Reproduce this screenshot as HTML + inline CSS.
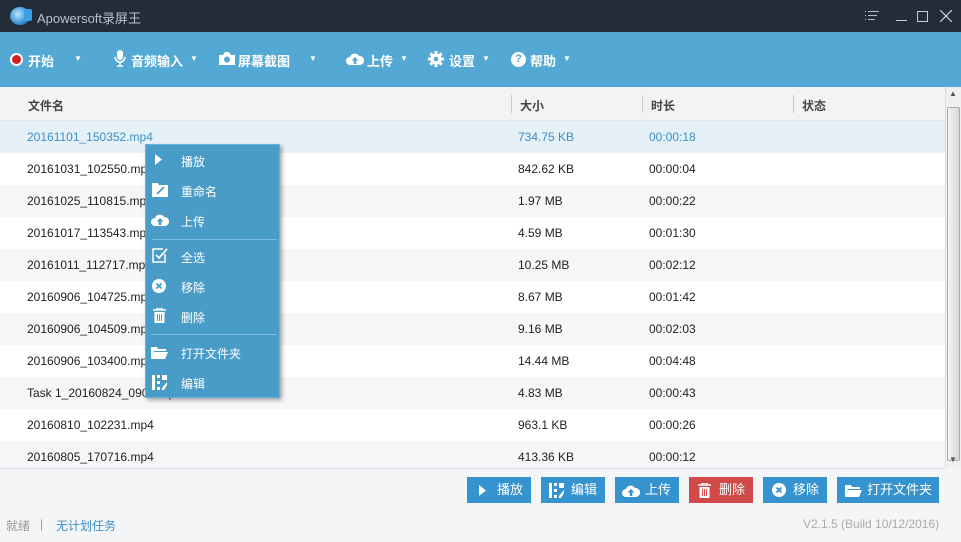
<!DOCTYPE html>
<html><head><meta charset="utf-8"><style>
*{margin:0;padding:0;box-sizing:border-box}
body{width:961px;height:542px;overflow:hidden;font-family:"Liberation Sans","Noto Sans CJK SC",sans-serif;font-size:12px;background:#f4f5f7;position:relative;color:#222}
.title{position:absolute;left:0;top:0;width:961px;height:32px;background:#232d3a;color:#b9c0c8;font-size:13px}
.tb{position:absolute;left:0;top:32px;width:961px;height:55px;background:#53a8d4;color:#fff;font-weight:bold;font-size:13px}
.tb span{position:absolute;top:19px}
.tb .ar{font-size:8px;font-weight:normal;top:22px}
.tb svg,.btn svg,.menu svg{position:absolute}
.hdr{position:absolute;left:0;top:87px;width:945px;height:34px;background:#f2f3f5;border-bottom:1px solid #e2e6ea;font-weight:bold;color:#444}
.hdr span{position:absolute;top:10px}
.sep{position:absolute;top:8px;width:1px;height:18px;background:#ccc}
.row{position:absolute;left:0;width:945px;height:32px}
.row span{position:absolute;top:9px}
.menu{position:absolute;left:145px;top:144px;width:135px;height:254px;background:#4a9cc8;box-shadow:2px 2px 4px rgba(0,0,0,.35);color:#fff;border:1px solid #6bb0d6}
.menu .t{position:absolute;left:35px}
.msep{position:absolute;left:6px;width:125px;height:1px;background:#7bbbe0}
.btn{position:absolute;top:477px;height:26px;background:#3593cf;color:#fff;font-size:13px;line-height:26px}
.btn .t{position:absolute;left:30px}
.scroll{position:absolute;left:945px;top:87px;width:16px;height:381px;background:#f0f0f0;border-left:1px solid #ddd}
</style></head><body>
<div class="title">
<div style="position:absolute;left:10px;top:7px;width:20px;height:18px;border-radius:50%;background:radial-gradient(circle at 40% 40%,#bfe6ff,#1f7fc9 70%)"></div>
<div style="position:absolute;left:24px;top:9px;width:8px;height:12px;background:#3aa0e6;border-radius:2px"></div>
<span style="position:absolute;left:37px;top:8px">Apowersoft录屏王</span>
<svg style="position:absolute;left:865px;top:10px" width="14" height="12"><g stroke="#bbb" stroke-width="1"><path d="M0 1.5h1M3 1.5h11M0 5.5h1M3 5.5h9M0 9.5h1M3 9.5h7"/></g></svg>
<div style="position:absolute;left:896px;top:20px;width:11px;height:1px;background:#ccc"></div>
<div style="position:absolute;left:917px;top:11px;width:11px;height:11px;border:1.5px solid #ccc"></div>
<svg style="position:absolute;left:940px;top:10px" width="12" height="12"><path d="M0 0L12 12M12 0L0 12" stroke="#ccc" stroke-width="1.3"/></svg>
</div>
<div class="tb">
<div style="position:absolute;left:10px;top:21px;width:13px;height:13px;border-radius:50%;background:#d32020;border:2px solid #fff"></div>
<span style="left:28px">开始</span><span class="ar" style="left:74px">▼</span>
<svg style="left:114px;top:18px" width="12" height="17"><rect x="3" y="0" width="6" height="10" rx="3" fill="#fff"/><path d="M1 7a5 5 0 0 0 10 0M6 12v4M3 16h6" stroke="#fff" stroke-width="1.5" fill="none"/></svg>
<span style="left:131px">音频输入</span><span class="ar" style="left:190px">▼</span>
<svg style="left:219px;top:20px" width="16" height="13"><path d="M0 3h4l2-3h4l2 3h4v10H0z" fill="#fff"/><circle cx="8" cy="7.5" r="3" fill="#53a8d4"/></svg>
<span style="left:238px">屏幕截图</span><span class="ar" style="left:309px">▼</span>
<svg style="left:346px;top:21px" width="18" height="12"><path d="M4 12a4 4 0 0 1 0-8a5 5 0 0 1 9-1a4.5 4.5 0 0 1 1 9z" fill="#fff"/><path d="M9 4l-3.5 3.5h2.2V11h2.6V7.5h2.2z" fill="#53a8d4"/></svg>
<span style="left:367px">上传</span><span class="ar" style="left:400px">▼</span>
<svg style="left:428px;top:19px" width="16" height="16" viewBox="0 0 16 16"><g fill="#fff"><circle cx="8" cy="8" r="5.5"/><rect x="6.5" y="0" width="3" height="16"/><rect x="0" y="6.5" width="16" height="3"/><rect x="6.5" y="0" width="3" height="16" transform="rotate(45 8 8)"/><rect x="6.5" y="0" width="3" height="16" transform="rotate(-45 8 8)"/></g><circle cx="8" cy="8" r="2.3" fill="#53a8d4"/></svg>
<span style="left:449px">设置</span><span class="ar" style="left:482px">▼</span>
<div style="position:absolute;left:511px;top:20px;width:15px;height:15px;border-radius:50%;background:#fff;color:#53a8d4;font-size:11px;text-align:center;line-height:15px">?</div>
<span style="left:530px">帮助</span><span class="ar" style="left:563px">▼</span>
</div>
<div class="hdr"><span style="left:28px">文件名</span><div class="sep" style="left:511px"></div><span style="left:520px">大小</span><div class="sep" style="left:642px"></div><span style="left:651px">时长</span><div class="sep" style="left:793px"></div><span style="left:802px">状态</span></div>

<div class="row" style="top:121px;background:#e5f1f7;color:#3a8fc4"><span style="left:27px">20161101_150352.mp4</span><span style="left:518px">734.75 KB</span><span style="left:649px">00:00:18</span></div>
<div class="row" style="top:153px;background:#fff"><span style="left:27px">20161031_102550.mp4</span><span style="left:518px">842.62 KB</span><span style="left:649px">00:00:04</span></div>
<div class="row" style="top:185px;background:#f5f6f8"><span style="left:27px">20161025_110815.mp4</span><span style="left:518px">1.97 MB</span><span style="left:649px">00:00:22</span></div>
<div class="row" style="top:217px;background:#fff"><span style="left:27px">20161017_113543.mp4</span><span style="left:518px">4.59 MB</span><span style="left:649px">00:01:30</span></div>
<div class="row" style="top:249px;background:#f5f6f8"><span style="left:27px">20161011_112717.mp4</span><span style="left:518px">10.25 MB</span><span style="left:649px">00:02:12</span></div>
<div class="row" style="top:281px;background:#fff"><span style="left:27px">20160906_104725.mp4</span><span style="left:518px">8.67 MB</span><span style="left:649px">00:01:42</span></div>
<div class="row" style="top:313px;background:#f5f6f8"><span style="left:27px">20160906_104509.mp4</span><span style="left:518px">9.16 MB</span><span style="left:649px">00:02:03</span></div>
<div class="row" style="top:345px;background:#fff"><span style="left:27px">20160906_103400.mp4</span><span style="left:518px">14.44 MB</span><span style="left:649px">00:04:48</span></div>
<div class="row" style="top:377px;background:#f5f6f8"><span style="left:27px">Task 1_20160824_0906.mp4</span><span style="left:518px">4.83 MB</span><span style="left:649px">00:00:43</span></div>
<div class="row" style="top:409px;background:#fff"><span style="left:27px">20160810_102231.mp4</span><span style="left:518px">963.1 KB</span><span style="left:649px">00:00:26</span></div>
<div class="row" style="top:441px;background:#f5f6f8;height:27px"><span style="left:27px">20160805_170716.mp4</span><span style="left:518px">413.36 KB</span><span style="left:649px">00:00:12</span></div>
<div style="position:absolute;left:0;top:468px;width:945px;height:1px;background:#dde1e5"></div>

<div class="scroll"><span style="position:absolute;left:3px;top:2px;font-size:8px;color:#555">▲</span>
<div style="position:absolute;left:1px;top:20px;width:13px;height:354px;background:linear-gradient(90deg,#f4f4f4,#d6d6d6);border:1px solid #aaa;border-radius:2px"></div>
<span style="position:absolute;left:3px;top:368px;font-size:8px;color:#555">▼</span></div>

<div class="menu">
<svg style="left:9px;top:9px" width="8" height="11"><path d="M0 0L7 5.5L0 11z" fill="#fff"/></svg><div class="t" style="top:8px">播放</div>
<svg style="left:6px;top:38px" width="16" height="14"><path d="M0 0h6l1 2h9v12H0z" fill="#fff"/><path d="M5 11l7-7" stroke="#4a9cc8" stroke-width="1.6"/></svg><div class="t" style="top:38px">重命名</div>
<svg style="left:5px;top:69px" width="18" height="12"><path d="M4 12a4 4 0 0 1 0-8a5 5 0 0 1 9-1a4.5 4.5 0 0 1 1 9z" fill="#fff"/><path d="M9 4l-3.5 3.5h2.2V11h2.6V7.5h2.2z" fill="#4a9cc8"/></svg><div class="t" style="top:68px">上传</div>
<div class="msep" style="top:94px"></div>
<svg style="left:6px;top:103px" width="16" height="15"><path d="M13 6v8H1V1h10" stroke="#fff" stroke-width="1.5" fill="none"/><path d="M4 7l3 3l8-9" stroke="#fff" stroke-width="1.7" fill="none"/></svg><div class="t" style="top:104px">全选</div>
<svg style="left:6px;top:134px" width="14" height="14"><circle cx="7" cy="7" r="7" fill="#fff"/><path d="M4.5 4.5l5 5M9.5 4.5l-5 5" stroke="#4a9cc8" stroke-width="1.8"/></svg><div class="t" style="top:134px">移除</div>
<svg style="left:7px;top:163px" width="13" height="15"><path d="M0 2h13M4 2V0h5v2" stroke="#fff" stroke-width="1.5" fill="none"/><path d="M1.5 4h10v11h-10z" fill="#fff"/><path d="M4.5 6v7M6.5 6v7M8.5 6v7" stroke="#4a9cc8" stroke-width="1"/></svg><div class="t" style="top:164px">删除</div>
<div class="msep" style="top:189px"></div>
<svg style="left:5px;top:201px" width="17" height="13"><path d="M0 1h6l1 2h8v2H3L0 13z" fill="#fff"/><path d="M3 6h14l-3 7H0z" fill="#fff"/></svg><div class="t" style="top:200px">打开文件夹</div>
<svg style="left:6px;top:230px" width="16" height="15"><g fill="#fff"><rect x="0" y="0" width="3" height="15"/><rect x="5" y="0" width="3" height="3"/><rect x="5" y="6" width="3" height="3"/><rect x="5" y="12" width="3" height="3"/><rect x="10" y="0" width="5" height="5"/><path d="M10 13l5-6v3l-3 5h-2z"/></g></svg><div class="t" style="top:230px">编辑</div>
</div>

<div class="btn" style="left:467px;width:64px"><svg style="left:12px;top:8px" width="8" height="11"><path d="M0 0L7 5.5L0 11z" fill="#fff"/></svg><span class="t">播放</span></div>
<div class="btn" style="left:541px;width:64px"><svg style="left:8px;top:6px" width="16" height="15"><g fill="#fff"><rect x="0" y="0" width="3" height="15"/><rect x="5" y="0" width="3" height="3"/><rect x="5" y="6" width="3" height="3"/><rect x="5" y="12" width="3" height="3"/><rect x="10" y="0" width="5" height="5"/><path d="M10 13l5-6v3l-3 5h-2z"/></g></svg><span class="t">编辑</span></div>
<div class="btn" style="left:615px;width:64px"><svg style="left:7px;top:8px" width="18" height="12"><path d="M4 12a4 4 0 0 1 0-8a5 5 0 0 1 9-1a4.5 4.5 0 0 1 1 9z" fill="#fff"/><path d="M9 4l-3.5 3.5h2.2V11h2.6V7.5h2.2z" fill="#3593cf"/></svg><span class="t">上传</span></div>
<div class="btn" style="left:689px;width:64px;background:#d04a4a"><svg style="left:9px;top:6px" width="13" height="15"><path d="M0 2h13M4 2V0h5v2" stroke="#fff" stroke-width="1.5" fill="none"/><path d="M1.5 4h10v11h-10z" fill="#fff"/><path d="M4.5 6v7M6.5 6v7M8.5 6v7" stroke="#d04a4a" stroke-width="1"/></svg><span class="t">删除</span></div>
<div class="btn" style="left:763px;width:64px"><svg style="left:9px;top:6px" width="14" height="14"><circle cx="7" cy="7" r="7" fill="#fff"/><path d="M4.5 4.5l5 5M9.5 4.5l-5 5" stroke="#3593cf" stroke-width="1.8"/></svg><span class="t">移除</span></div>
<div class="btn" style="left:837px;width:102px"><svg style="left:8px;top:7px" width="17" height="13"><path d="M0 1h6l1 2h8v2H3L0 13z" fill="#fff"/><path d="M3 6h14l-3 7H0z" fill="#fff"/></svg><span class="t">打开文件夹</span></div>

<span style="position:absolute;left:6px;top:517px;color:#999">就绪</span>
<span style="position:absolute;left:40px;top:517px;color:#999">|</span>
<span style="position:absolute;left:56px;top:517px;color:#3a8fc4">无计划任务</span>
<span style="position:absolute;left:803px;top:517px;color:#aaa">V2.1.5 (Build 10/12/2016)</span>
</body></html>
